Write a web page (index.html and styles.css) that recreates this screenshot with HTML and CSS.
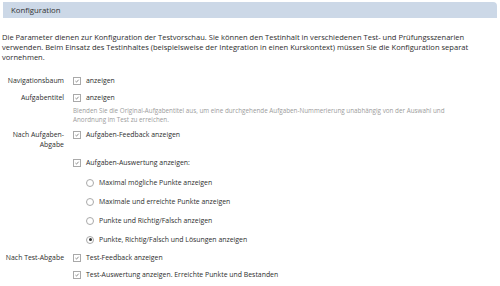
FILE: index.html
```html
<!DOCTYPE html>
<html lang="de">
<head>
<meta charset="utf-8">
<link rel="stylesheet" href="styles.css">
</head>
<body>
<div class="head"><span>Konfiguration</span></div>
<p class="intro">Die Parameter dienen zur Konfiguration der Testvorschau. Sie können den Testinhalt in verschiedenen Test- und Prüfungsszenarien verwenden. Beim Einsatz des Testinhaltes (beispielsweise der Integration in einen Kurskontext) müssen Sie die Konfiguration separat vornehmen.</p>
<div class="form">
  <div class="lbl r1">Navigationsbaum</div>
  <div class="ctl r1"><span class="cb"><svg viewBox="0 0 9 9"><path d="M2.2 4.6 L3.8 6.2 L6.9 2.6"/></svg></span>anzeigen</div>

  <div class="lbl r2">Aufgabentitel</div>
  <div class="ctl r2 col">
    <div class="line"><span class="cb"><svg viewBox="0 0 9 9"><path d="M2.2 4.6 L3.8 6.2 L6.9 2.6"/></svg></span>anzeigen</div>
    <div class="desc">Blenden Sie die Original-Aufgabentitel aus, um eine durchgehende Aufgaben-Nummerierung unabhängig von der Auswahl und Anordnung im Test zu erreichen.</div>
  </div>

  <div class="lbl r3">Nach Aufgaben-<br>Abgabe</div>
  <div class="ctl r3 col">
    <div class="line"><span class="cb"><svg viewBox="0 0 9 9"><path d="M2.2 4.6 L3.8 6.2 L6.9 2.6"/></svg></span>Aufgaben-Feedback anzeigen</div>
    <div class="line l2"><span class="cb"><svg viewBox="0 0 9 9"><path d="M2.2 4.6 L3.8 6.2 L6.9 2.6"/></svg></span>Aufgaben-Auswertung anzeigen:</div>
    <div class="radios">
      <div class="line rl"><span class="rb"></span>Maximal mögliche Punkte anzeigen</div>
      <div class="line rl"><span class="rb"></span>Maximale und erreichte Punkte anzeigen</div>
      <div class="line rl"><span class="rb"></span>Punkte und Richtig/Falsch anzeigen</div>
      <div class="line rl"><span class="rb on"></span>Punkte, Richtig/Falsch und Lösungen anzeigen</div>
    </div>
  </div>

  <div class="lbl r4">Nach Test-Abgabe</div>
  <div class="ctl r4 col">
    <div class="line"><span class="cb"><svg viewBox="0 0 9 9"><path d="M2.2 4.6 L3.8 6.2 L6.9 2.6"/></svg></span>Test-Feedback anzeigen</div>
    <div class="line l3"><span class="cb"><svg viewBox="0 0 9 9"><path d="M2.2 4.6 L3.8 6.2 L6.9 2.6"/></svg></span>Test-Auswertung anzeigen. Erreichte Punkte und Bestanden</div>
  </div>
</div>
</body>
</html>
```
FILE: styles.css
```css
html, body { margin: 0; padding: 0; background: #fff; }
body {
  font-family: "Open Sans", "Liberation Sans", sans-serif;
  font-size: 6.9px;
  color: #2d2d2d;
  width: 500px;
  height: 286px;
  overflow: hidden;
}
.head {
  margin: 2px 3px 0 3px;
  height: 16px;
  background: #ccd8e7;
  border-top-right-radius: 4px;
  display: flex;
  align-items: center;
  padding-left: 8px;
  font-size: 7.8px;
  color: #333;
}
.intro {
  margin: 14px 0 0 2px;
  font-size: 7.55px;
  line-height: 10px;
  width: 480px;
}
.form {
  margin-top: 13px;
  display: grid;
  grid-template-columns: 64px 1fr;
  column-gap: 9px;
}
.lbl {
  text-align: right;
  line-height: 10px;
}
.ctl { display: flex; align-items: center; line-height: 10px; }
.col { flex-direction: column; align-items: flex-start; }
.line { display: flex; align-items: center; height: 10px; }
.cb {
  width: 8px; height: 8px;
  border: 1px solid #a9a9a9;
  box-sizing: border-box;
  margin-right: 5px;
  background: #fff;
  display: inline-flex;
}
.cb svg { width: 100%; height: 100%; }
.cb path { fill: none; stroke: #555; stroke-width: 1; }
.r1 { margin-top: 1px; }
.r2 { margin-top: 7px; }
.desc {
  margin-top: 3px;
  font-size: 6.3px;
  line-height: 9px;
  color: #9c9c9c;
  width: 378px;
}
.r3 { margin-top: 6px; }
.l2 { margin-top: 18px; }
.radios { margin-left: 13px; margin-top: 9.5px; display: flex; flex-direction: column; gap: 9px; }
.rb {
  width: 8px; height: 8px;
  border: 1px solid #a9a9a9;
  border-radius: 50%;
  box-sizing: border-box;
  margin-right: 5px;
  background: #fff;
  position: relative;
}
.rb.on::after {
  content: "";
  position: absolute;
  left: 1.5px; top: 1.5px;
  width: 3px; height: 3px;
  border-radius: 50%;
  background: #333;
}
.r4 { margin-top: 8px; }
.l3 { margin-top: 7px; }
```
